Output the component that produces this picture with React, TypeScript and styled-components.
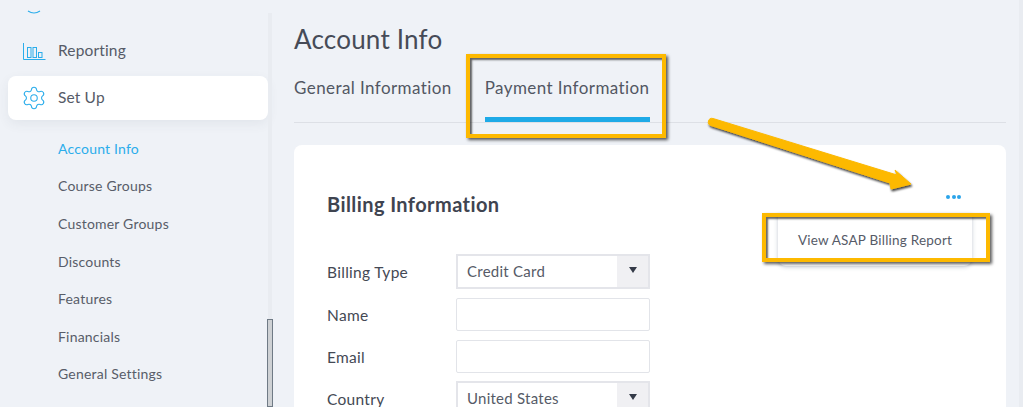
import React from "react";
import styled, { createGlobalStyle } from "styled-components";
import { Settings } from "lucide-react";

const Global = createGlobalStyle`
  html, body { margin: 0; padding: 0; height: 407px; overflow: hidden; background: #eff2f7; }
  #root { height: 407px; }
  * { box-sizing: border-box; }
`;

const Page = styled.div`
  position: relative;
  width: 1023px;
  height: 407px;
  overflow: hidden;
  display: flex;
  font-family: "Lato", "Noto Sans", sans-serif;
  color: #4a4f5c;
`;

const Sidebar = styled.aside`
  width: 268px;
  flex: none;
  padding: 29px 0 0 8px;
  display: flex;
  flex-direction: column;
`;

const Track = styled.div`
  width: 26px;
  flex: none;
  margin-top: 13px;
  display: flex;
  flex-direction: column;
  align-items: flex-start;
`;

const TrackRail = styled.div`
  width: 4px;
  height: 314px;
  background: #e9ecf1;
`;

const Thumb = styled.div`
  width: 6px;
  height: 90px;
  margin-left: -1px;
  background: #ced1d4;
  border: 1px solid #6f7a85;
`;

const PeekIcon = styled.svg`
  position: absolute;
  left: 26px;
  top: 10px;
`;

const NavItem = styled.div<{ $active?: boolean }>`
  height: 44px;
  display: flex;
  align-items: center;
  gap: 11px;
  padding-left: 15px;
  border-radius: 8px;
  font-size: 15.5px;
  letter-spacing: 0.15px;
  color: #565b67;
  background: ${(p) => (p.$active ? "#fff" : "transparent")};
  box-shadow: ${(p) => (p.$active ? "0 4px 12px rgba(60,70,90,.07)" : "none")};
  margin-bottom: ${(p) => (p.$active ? "10px" : "3px")};
`;

const NavText = styled.span`
  margin-bottom: 2px;
`;

const GearIcon = styled(Settings)`
  flex: none;
  margin: 0 0 0 -2px;
`;

const SubList = styled.div`
  display: flex;
  flex-direction: column;
  padding-left: 50px;
  margin-top: -0.5px;
`;

const SubItem = styled.div<{ $active?: boolean }>`
  height: 37.6px;
  display: flex;
  align-items: center;
  font-size: 14px;
  letter-spacing: 0.2px;
  color: ${(p) => (p.$active ? "#2badeb" : "#585d69")};
`;

const Main = styled.main`
  width: 712px;
  flex: none;
  display: flex;
  flex-direction: column;
`;

const Title = styled.h1`
  margin: 23px 0 0;
  height: 32px;
  line-height: 32px;
  font-size: 26px;
  font-weight: 400;
  letter-spacing: 0.2px;
  color: #464b57;
`;

const Tabs = styled.div`
  display: flex;
  gap: 33px;
  margin-top: 11px;
  height: 57px;
  border-bottom: 1px solid #dde0e6;
`;

const Tab = styled.div<{ $active?: boolean }>`
  height: 56px;
  padding-top: 10px;
  font-size: 17px;
  line-height: 24px;
  letter-spacing: 0.42px;
  color: #525763;
  border-bottom: ${(p) => (p.$active ? "5px solid #1eaae7" : "none")};
`;

const Card = styled.section`
  position: relative;
  margin-top: 22px;
  height: 300px;
  background: #fff;
  border-radius: 8px;
  padding: 46px 33px 0;
`;

const CardTitle = styled.h2`
  margin: 0 0 34px;
  height: 26px;
  line-height: 26px;
  font-size: 20px;
  font-weight: 700;
  letter-spacing: 0.42px;
  color: #3f4450;
`;

const Dots = styled.div`
  position: absolute;
  top: 50px;
  right: 45px;
  display: flex;
  gap: 1.5px;
`;

const Dot = styled.span`
  width: 4px;
  height: 4px;
  border-radius: 50%;
  background: #2ba4ea;
`;

const Menu = styled.div`
  position: absolute;
  top: 69px;
  left: 484px;
  width: 194px;
  height: 52px;
  display: flex;
  align-items: center;
  justify-content: center;
  background: #fff;
  border-radius: 0 0 8px 8px;
  box-shadow: 0 1px 4px rgba(60, 80, 110, 0.3);
  font-size: 13.5px;
  letter-spacing: 0.22px;
  color: #565b67;
`;

const FormRow = styled.div<{ $h: number }>`
  display: flex;
  align-items: center;
  height: ${(p) => p.$h}px;
`;

const Label = styled.label`
  width: 129px;
  flex: none;
  font-size: 15.5px;
  letter-spacing: 0.3px;
  color: #444954;
`;

const Input = styled.div`
  width: 194px;
  height: 33px;
  background: #fff;
  border: 1px solid #e2e4e9;
  border-radius: 2px;
`;

const Select = styled.div`
  width: 194px;
  height: 35px;
  display: flex;
  background: #fff;
  border: 2px solid #e4e5ea;
  font-size: 15px;
  letter-spacing: 0.25px;
  color: #565b67;
`;

const SelectValue = styled.div`
  flex: 1;
  padding-left: 9px;
  line-height: 31px;
`;

const SelectArrow = styled.div`
  width: 31px;
  background: #f0f0f3;
  display: flex;
  justify-content: center;
  padding-top: 11px;
`;

const Caret = styled.span`
  width: 0;
  height: 0;
  border-left: 4.5px solid transparent;
  border-right: 4.5px solid transparent;
  border-top: 6px solid #343a48;
`;

const Annotation = styled.div<{ $x: number; $y: number; $w: number; $h: number }>`
  position: absolute;
  left: ${(p) => p.$x}px;
  top: ${(p) => p.$y}px;
  width: ${(p) => p.$w}px;
  height: ${(p) => p.$h}px;
  border: 4px solid #fdb900;
  box-shadow: 2px 2px 3px rgba(0, 0, 0, 0.65), inset 2px 2px 2px rgba(0, 0, 0, 0.6);
`;

const ArrowSvg = styled.svg`
  position: absolute;
  left: 700px;
  top: 110px;
  overflow: visible;
`;

const RightEdge = styled.div`
  position: absolute;
  right: 0;
  top: 0;
  width: 4px;
  height: 407px;
  background: #e9ecf1;
`;

export default function App() {
  return (
    <>
      <Global />
      <Page>
        <PeekIcon width="16" height="6" viewBox="0 0 16 6">
          <path d="M2 1 Q8 5 14 1" fill="none" stroke="#2badeb" strokeWidth="1.2" />
        </PeekIcon>
        <Sidebar>
          <NavItem>
            <svg width="24" height="22" viewBox="0 0 24 22" fill="none" stroke="#2badeb" strokeWidth="1">
              <path d="M.5 3v16.5h22" />
              <rect x="4.5" y="7.5" width="3.5" height="10" />
              <rect x="10" y="7.5" width="3.5" height="10" />
              <rect x="15.5" y="12.5" width="3.5" height="5" />
            </svg>
            <NavText>Reporting</NavText>
          </NavItem>
          <NavItem $active>
            <GearIcon size={26} color="#2badeb" strokeWidth={1} />
            <NavText>Set Up</NavText>
          </NavItem>
          <SubList>
            <SubItem $active>Account Info</SubItem>
            <SubItem>Course Groups</SubItem>
            <SubItem>Customer Groups</SubItem>
            <SubItem>Discounts</SubItem>
            <SubItem>Features</SubItem>
            <SubItem>Financials</SubItem>
            <SubItem>General Settings</SubItem>
          </SubList>
        </Sidebar>
        <Track>
          <TrackRail />
          <Thumb />
        </Track>
        <Main>
          <Title>Account Info</Title>
          <Tabs>
            <Tab>General Information</Tab>
            <Tab $active>Payment Information</Tab>
          </Tabs>
          <Card>
            <CardTitle>Billing Information</CardTitle>
            <Dots>
              <Dot />
              <Dot />
              <Dot />
            </Dots>
            <Menu>View ASAP Billing Report</Menu>
            <FormRow $h={41}>
              <Label>Billing Type</Label>
              <Select>
                <SelectValue>Credit Card</SelectValue>
                <SelectArrow>
                  <Caret />
                </SelectArrow>
              </Select>
            </FormRow>
            <FormRow $h={45}>
              <Label>Name</Label>
              <Input />
            </FormRow>
            <FormRow $h={39}>
              <Label>Email</Label>
              <Input />
            </FormRow>
            <FormRow $h={45}>
              <Label>Country</Label>
              <Select>
                <SelectValue>United States</SelectValue>
                <SelectArrow>
                  <Caret />
                </SelectArrow>
              </Select>
            </FormRow>
          </Card>
        </Main>
        <RightEdge />
        <Annotation $x={466} $y={54} $w={200} $h={84} />
        <Annotation $x={762} $y={213} $w={228} $h={49} />
        <ArrowSvg width="220" height="80" viewBox="0 0 220 80">
          <defs>
            <filter id="as" x="-10%" y="-20%" width="120%" height="150%">
              <feDropShadow dx="1" dy="2" stdDeviation="1.2" floodColor="#000" floodOpacity="0.75" />
            </filter>
          </defs>
          <path
            d="M13 8.5 L197 65 L195 60 L211 74 L191 79 L190 73 L11 15.5 A3.6 3.6 0 0 1 13 8.5Z"
            fill="#fdb900"
            stroke="#fdb900"
            strokeWidth="1"
            strokeLinejoin="round"
            filter="url(#as)"
          />
        </ArrowSvg>
      </Page>
    </>
  );
}
